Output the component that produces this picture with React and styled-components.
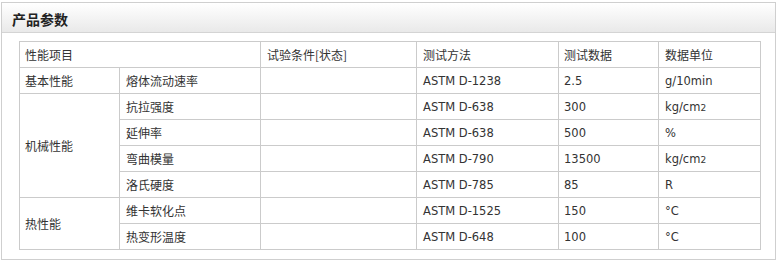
import React from "react";
import styled, { createGlobalStyle } from "styled-components";

const GlobalStyle = createGlobalStyle`
  body {
    margin: 0;
    background: #fff;
    font-family: "DejaVu Sans", "Noto Sans CJK SC", sans-serif;
    color: #333;
  }
`;

const Panel = styled.div`
  margin: 2px 0 0 1px;
  width: 775px;
  height: 258px;
  box-sizing: border-box;
  border: 1px solid #cfcfcf;
`;

const PanelHeader = styled.div`
  height: 30px;
  border-bottom: 1px solid #d4d4d4;
  background: linear-gradient(to bottom, #ffffff, #e9e9e9);
  display: flex;
  align-items: center;
  padding: 2px 0 0 10px;
  box-sizing: border-box;
`;

const Title = styled.h3`
  margin: 0;
  font-family: "Noto Sans CJK SC", sans-serif;
  font-size: 14px;
  font-weight: 700;
  color: #222;
`;

const Body = styled.div`
  padding: 8px 15px 0 17px;
`;

const Table = styled.table`
  width: 741px;
  border-collapse: collapse;
  table-layout: fixed;
  border: 1px solid #cbcbcb;
  font-size: 12px;
`;

const Cell = styled.td`
  height: 25px;
  padding: 0 ${(p) => (p.$indent ? 6 : 5)}px;
  border: 1px solid #cbcbcb;
  vertical-align: middle;
  white-space: nowrap;
  font-family: ${(p) =>
    p.$latin
      ? `"DejaVu Sans", "Noto Sans CJK SC", sans-serif`
      : `"Noto Sans CJK SC", sans-serif`};
  font-size: ${(p) => (p.$latin ? "11.5px" : "12px")};
  color: #333;
`;

const Sup = styled.span`
  font-size: 9px;
`;

const widths = [100, 141, 156, 142, 100, 102];

const kgcm = (
  <>
    kg/cm<Sup>2</Sup>
  </>
);

const rows = [
  { group: "基本性能", span: 1, item: "熔体流动速率", method: "ASTM D-1238", value: "2.5", unit: "g/10min" },
  { group: "机械性能", span: 4, item: "抗拉强度", method: "ASTM D-638", value: "300", unit: kgcm },
  { item: "延伸率", method: "ASTM D-638", value: "500", unit: "%" },
  { item: "弯曲模量", method: "ASTM D-790", value: "13500", unit: kgcm },
  { item: "洛氏硬度", method: "ASTM D-785", value: "85", unit: "R" },
  { group: "热性能", span: 2, item: "维卡软化点", method: "ASTM D-1525", value: "150", unit: "°C" },
  { item: "热变形温度", method: "ASTM D-648", value: "100", unit: "°C" },
];

export default function App() {
  return (
    <>
      <GlobalStyle />
      <Panel>
        <PanelHeader>
          <Title>产品参数</Title>
        </PanelHeader>
        <Body>
          <Table>
            <colgroup>
              {widths.map((w, i) => (
                <col key={i} style={{ width: w }} />
              ))}
            </colgroup>
            <tbody>
              <tr>
                <Cell colSpan={2}>性能项目</Cell>
                <Cell $indent>试验条件[状态]</Cell>
                <Cell $indent>测试方法</Cell>
                <Cell>测试数据</Cell>
                <Cell $indent>数据单位</Cell>
              </tr>
              {rows.map((r, i) => (
                <tr key={i}>
                  {r.group && <Cell rowSpan={r.span}>{r.group}</Cell>}
                  <Cell $indent>{r.item}</Cell>
                  <Cell />
                  <Cell $indent $latin>{r.method}</Cell>
                  <Cell $latin>{r.value}</Cell>
                  <Cell $indent $latin>{r.unit}</Cell>
                </tr>
              ))}
            </tbody>
          </Table>
        </Body>
      </Panel>
    </>
  );
}
